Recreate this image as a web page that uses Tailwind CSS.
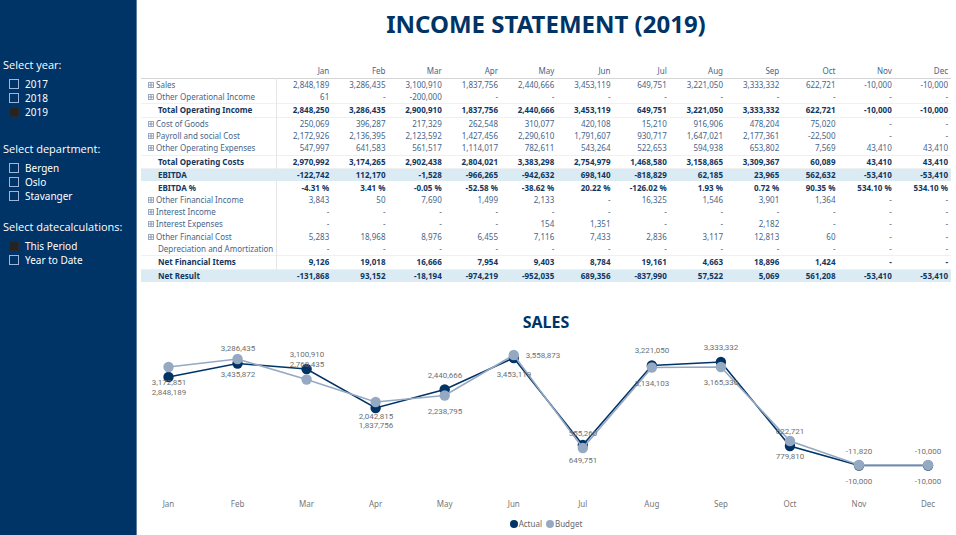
<!DOCTYPE html>
<html lang="en">
<head>
<meta charset="utf-8">
<title>Income Statement (2019)</title>
<script src="https://cdn.jsdelivr.net/npm/@tailwindcss/browser@4"></script>
</head>
<body class="bg-white font-['Noto_Sans',sans-serif]">
<div class="flex min-h-screen">
  <aside class="w-[137px] shrink-0 bg-[#003366] border-r border-[#5f7f9f] pt-[57px] pl-[3px] text-white">
    <fieldset class="mb-[22px]">
      <legend class="mb-1 font-['Open_Sans',sans-serif] text-[11px] leading-4 whitespace-nowrap">Select year:</legend>
      <div class="flex flex-col pl-[6px] text-[10px] leading-[14px]">
        <label class="flex items-center gap-[6px]"><input type="checkbox" class="size-[10px] appearance-none border border-[#9fb4dc] checked:border-[#252a33] checked:bg-[#252423]">2017</label>
        <label class="flex items-center gap-[6px]"><input type="checkbox" class="size-[10px] appearance-none border border-[#9fb4dc] checked:border-[#252a33] checked:bg-[#252423]">2018</label>
        <label class="flex items-center gap-[6px]"><input type="checkbox" checked class="size-[10px] appearance-none border border-[#9fb4dc] checked:border-[#252a33] checked:bg-[#252423]">2019</label>
      </div>
    </fieldset>
    <fieldset class="mb-4">
      <legend class="mb-1 font-['Open_Sans',sans-serif] text-[11px] leading-4 whitespace-nowrap">Select department:</legend>
      <div class="flex flex-col pl-[6px] text-[10px] leading-[14px]">
        <label class="flex items-center gap-[6px]"><input type="checkbox" class="size-[10px] appearance-none border border-[#9fb4dc] checked:border-[#252a33] checked:bg-[#252423]">Bergen</label>
        <label class="flex items-center gap-[6px]"><input type="checkbox" class="size-[10px] appearance-none border border-[#9fb4dc] checked:border-[#252a33] checked:bg-[#252423]">Oslo</label>
        <label class="flex items-center gap-[6px]"><input type="checkbox" class="size-[10px] appearance-none border border-[#9fb4dc] checked:border-[#252a33] checked:bg-[#252423]">Stavanger</label>
      </div>
    </fieldset>
    <fieldset>
      <legend class="mb-1 font-['Open_Sans',sans-serif] text-[11px] leading-4 whitespace-nowrap">Select datecalculations:</legend>
      <div class="flex flex-col pl-[6px] text-[10px] leading-[14px]">
        <label class="flex items-center gap-[6px]"><input type="checkbox" checked class="size-[10px] appearance-none border border-[#9fb4dc] checked:border-[#252a33] checked:bg-[#252423]">This Period</label>
        <label class="flex items-center gap-[6px]"><input type="checkbox" class="size-[10px] appearance-none border border-[#9fb4dc] checked:border-[#252a33] checked:bg-[#252423]">Year to Date</label>
      </div>
    </fieldset>
  </aside>

  <main class="min-w-0 flex-1 pr-[5px] pl-1">
    <h1 class="pt-2 text-center text-2xl leading-8 font-bold text-[#003366]">INCOME STATEMENT (2019)</h1>

    <table class="mt-6 h-[218px] w-full table-fixed border-collapse text-right text-[8px] leading-[10px] text-[#47658a]">
      <thead>
        <tr id="months" class="h-[14px] border-b border-[#d4d4d4]"><th class="w-[135px]"></th></tr>
      </thead>
      <tbody id="rows"></tbody>
    </table>

    <section>
      <h2 class="pt-7 text-center text-base leading-6 font-bold text-[#003366]">SALES</h2>
      <svg id="chart" viewBox="141 338 810 174" class="mt-1 block w-full" role="img" aria-label="Sales, actual and budget by month"></svg>
      <div class="mt-[6px] flex justify-center gap-1 text-[8px] leading-3 text-[#666]">
        <span class="flex items-center gap-px"><span class="size-2 rounded-full bg-[#003366]"></span>Actual</span>
        <span class="flex items-center gap-px"><span class="size-2 rounded-full bg-[#95a9c2]"></span>Budget</span>
      </div>
    </section>
  </main>
</div>

<script>
const months = 'Jan Feb Mar Apr May Jun Jul Aug Sep Oct Nov Dec'.split(' ');
// kind: e = expandable, p = plain, b = subtotal, n = bold without rules, h = highlighted
const data = [
  ['e', 'Sales', '2,848,189|3,286,435|3,100,910|1,837,756|2,440,666|3,453,119|649,751|3,221,050|3,333,332|622,721|-10,000|-10,000'],
  ['e', 'Other Operational Income', '61|-|-200,000|-|-|-|-|-|-|-|-|-'],
  ['b', 'Total Operating Income', '2,848,250|3,286,435|2,900,910|1,837,756|2,440,666|3,453,119|649,751|3,221,050|3,333,332|622,721|-10,000|-10,000'],
  ['e', 'Cost of Goods', '250,069|396,287|217,329|262,548|310,077|420,108|15,210|916,906|478,204|75,020|-|-'],
  ['e', 'Payroll and social Cost', '2,172,926|2,136,395|2,123,592|1,427,456|2,290,610|1,791,607|930,717|1,647,021|2,177,361|-22,500|-|-'],
  ['e', 'Other Operating Expenses', '547,997|641,583|561,517|1,114,017|782,611|543,264|522,653|594,938|653,802|7,569|43,410|43,410'],
  ['b', 'Total Operating Costs', '2,970,992|3,174,265|2,902,438|2,804,021|3,383,298|2,754,979|1,468,580|3,158,865|3,309,367|60,089|43,410|43,410'],
  ['h', 'EBITDA', '-122,742|112,170|-1,528|-966,265|-942,632|698,140|-818,829|62,185|23,965|562,632|-53,410|-53,410'],
  ['n', 'EBITDA %', '-4.31 %|3.41 %|-0.05 %|-52.58 %|-38.62 %|20.22 %|-126.02 %|1.93 %|0.72 %|90.35 %|534.10 %|534.10 %'],
  ['e', 'Other Financial Income', '3,843|50|7,690|1,499|2,133|-|16,325|1,546|3,901|1,364|-|-'],
  ['e', 'Interest Income', '-|-|-|-|-|-|-|-|-|-|-|-'],
  ['e', 'Interest Expenses', '-|-|-|-|154|1,351|-|-|2,182|-|-|-'],
  ['e', 'Other Financial Cost', '5,283|18,968|8,976|6,455|7,116|7,433|2,836|3,117|12,813|60|-|-'],
  ['p', 'Depreciation and Amortization', '-|-|-|-|-|-|-|-|-|-|-|-'],
  ['b', 'Net Financial Items', '9,126|19,018|16,666|7,954|9,403|8,784|19,161|4,663|18,896|1,424|-|-'],
  ['h', 'Net Result', '-131,868|93,152|-18,194|-974,219|-952,035|689,356|-837,990|57,522|5,069|561,208|-53,410|-53,410'],
];
const rowClass = {
  e: '', p: '',
  b: 'border-y border-[#f0f0f0] font-bold text-[#12365f]',
  n: 'font-bold text-[#12365f]',
  h: 'bg-[#daebf4] font-bold text-[#12365f]',
};
document.getElementById('months').innerHTML += months.map(m => `<th scope="col" class="pr-[3px] font-normal">${m}</th>`).join('');
document.getElementById('rows').innerHTML = data.map(([k, name, vals]) => {
  const icon = k === 'e'
    ? `<button type="button" aria-label="Expand ${name}" class="mr-[2px] block"><svg class="size-[6px]" viewBox="0 0 6 6" fill="none" stroke="#6b83a3" stroke-width="0.8"><path d="M.4.4h5.2v5.2H.4zM3 1v4M1 3h4"/></svg></button>`
    : '<span class="w-[10px]"></span>';
  return `<tr class="${rowClass[k]}"><th scope="row" class="${k === 'h' ? 'p-0' : 'border-r border-[#e6e6e6] p-0'} ${'ep'.includes(k) ? 'font-normal' : 'font-bold'}"><div class="flex items-center pl-[7px] whitespace-nowrap">${icon}${name}</div></th>` +
    vals.split('|').map(v => `<td class="p-0 pr-[3px] whitespace-nowrap">${v}</td>`).join('') + '</tr>';
}).join('');

const xs = months.map((_, i) => 168.5 + i * 69.05);
const series = [
  ['#003366', [377, 363.5, 369, 408, 389.5, 358, 445, 365.5, 362, 446, 465.5, 465.5]],
  ['#95a9c2', [367, 359, 379.5, 402, 395.5, 355, 448, 367.5, 367, 441, 465, 465]],
];
const labels = [
  ['3,172,851', 169, 382], ['2,848,189', 169, 392], ['3,286,435', 238, 348], ['3,435,872', 238, 374],
  ['3,100,910', 307, 354], ['2,768,435', 307, 364], ['2,042,815', 376, 416], ['1,837,756', 376, 425],
  ['2,440,666', 445, 375], ['2,238,795', 445, 411], ['3,558,873', 543, 355], ['3,453,119', 514, 374],
  ['555,260', 583, 433], ['649,751', 583, 460], ['3,221,050', 652, 350], ['3,134,103', 652, 383],
  ['3,333,332', 721, 347], ['3,165,330', 721, 382], ['622,721', 790, 431], ['779,810', 790, 456],
  ['-11,820', 859, 451], ['-10,000', 859, 481], ['-10,000', 928, 451], ['-10,000', 928, 481],
];
document.getElementById('chart').innerHTML =
  series.map(([c, ys]) => `<polyline fill="none" stroke="${c}" stroke-width="1.6" points="${ys.map((y, i) => xs[i] + ',' + y).join(' ')}"/>` +
    ys.map((y, i) => `<circle cx="${xs[i]}" cy="${y}" r="5.2" fill="${c}"/>`).join('')).join('') +
  `<g text-anchor="middle" fill="#6f6f6f" class="font-['Roboto',sans-serif] text-[8px]">` +
  labels.map(([t, x, y]) => `<text x="${x}" y="${y + 3}">${t}</text>`).join('') + '</g>' +
  `<g text-anchor="middle" fill="#777" class="text-[8px]">` +
  months.map((m, i) => `<text x="${xs[i]}" y="507">${m}</text>`).join('') + '</g>';
</script>
</body>
</html>
